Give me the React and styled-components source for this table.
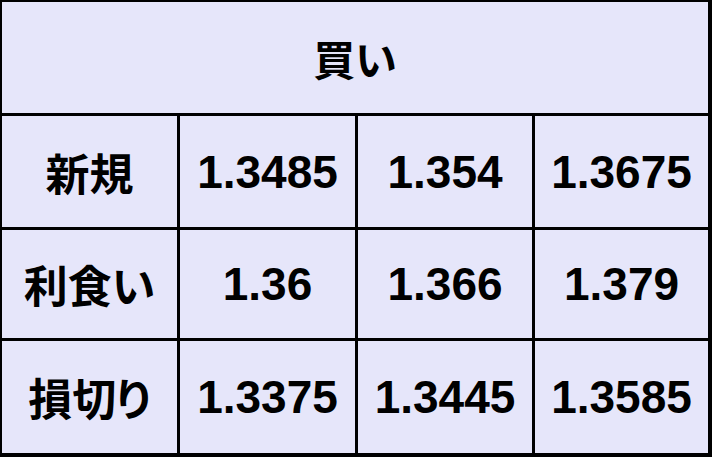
import React from "react";
import styled, { createGlobalStyle } from "styled-components";

const GlobalStyle = createGlobalStyle`
  html, body {
    margin: 0;
    padding: 0;
    background: #ffffff;
  }
`;

const Table = styled.div`
  width: 712px;
  height: 457px;
  box-sizing: border-box;
  padding: 2px 4px 4px 2px;
  background-color: #000;
  display: grid;
  grid-template-columns: 175px 175px 174px 173px;
  grid-template-rows: 111px 111px 108px 112px;
  gap: 3px;
`;

const Cell = styled.div`
  background-color: #e6e6fa;
  display: flex;
  align-items: center;
  justify-content: center;
  color: #000;
  font-family: "Liberation Sans", Arial, sans-serif;
  font-weight: bold;
  font-size: 46px;
  grid-column: ${(props) => (props.span ? `span ${props.span}` : "auto")};
`;

const Label = styled.span`
  font-family: "Noto Sans CJK JP", "Noto Sans", sans-serif;
  font-weight: bold;
  font-size: ${(props) => props.size || "44px"};
  font-feature-settings: "palt";
  line-height: 1;
`;

const rows = [
  { label: "新規", values: ["1.3485", "1.354", "1.3675"] },
  { label: "利食い", values: ["1.36", "1.366", "1.379"] },
  { label: "損切り", values: ["1.3375", "1.3445", "1.3585"] },
];

function App() {
  return (
    <>
      <GlobalStyle />
      <Table>
        <Cell span={4}>
          <Label size="42px">買い</Label>
        </Cell>
        {rows.map((row) => (
          <React.Fragment key={row.label}>
            <Cell>
              <Label>{row.label}</Label>
            </Cell>
            {row.values.map((v) => (
              <Cell key={v}>{v}</Cell>
            ))}
          </React.Fragment>
        ))}
      </Table>
    </>
  );
}

export default App;
